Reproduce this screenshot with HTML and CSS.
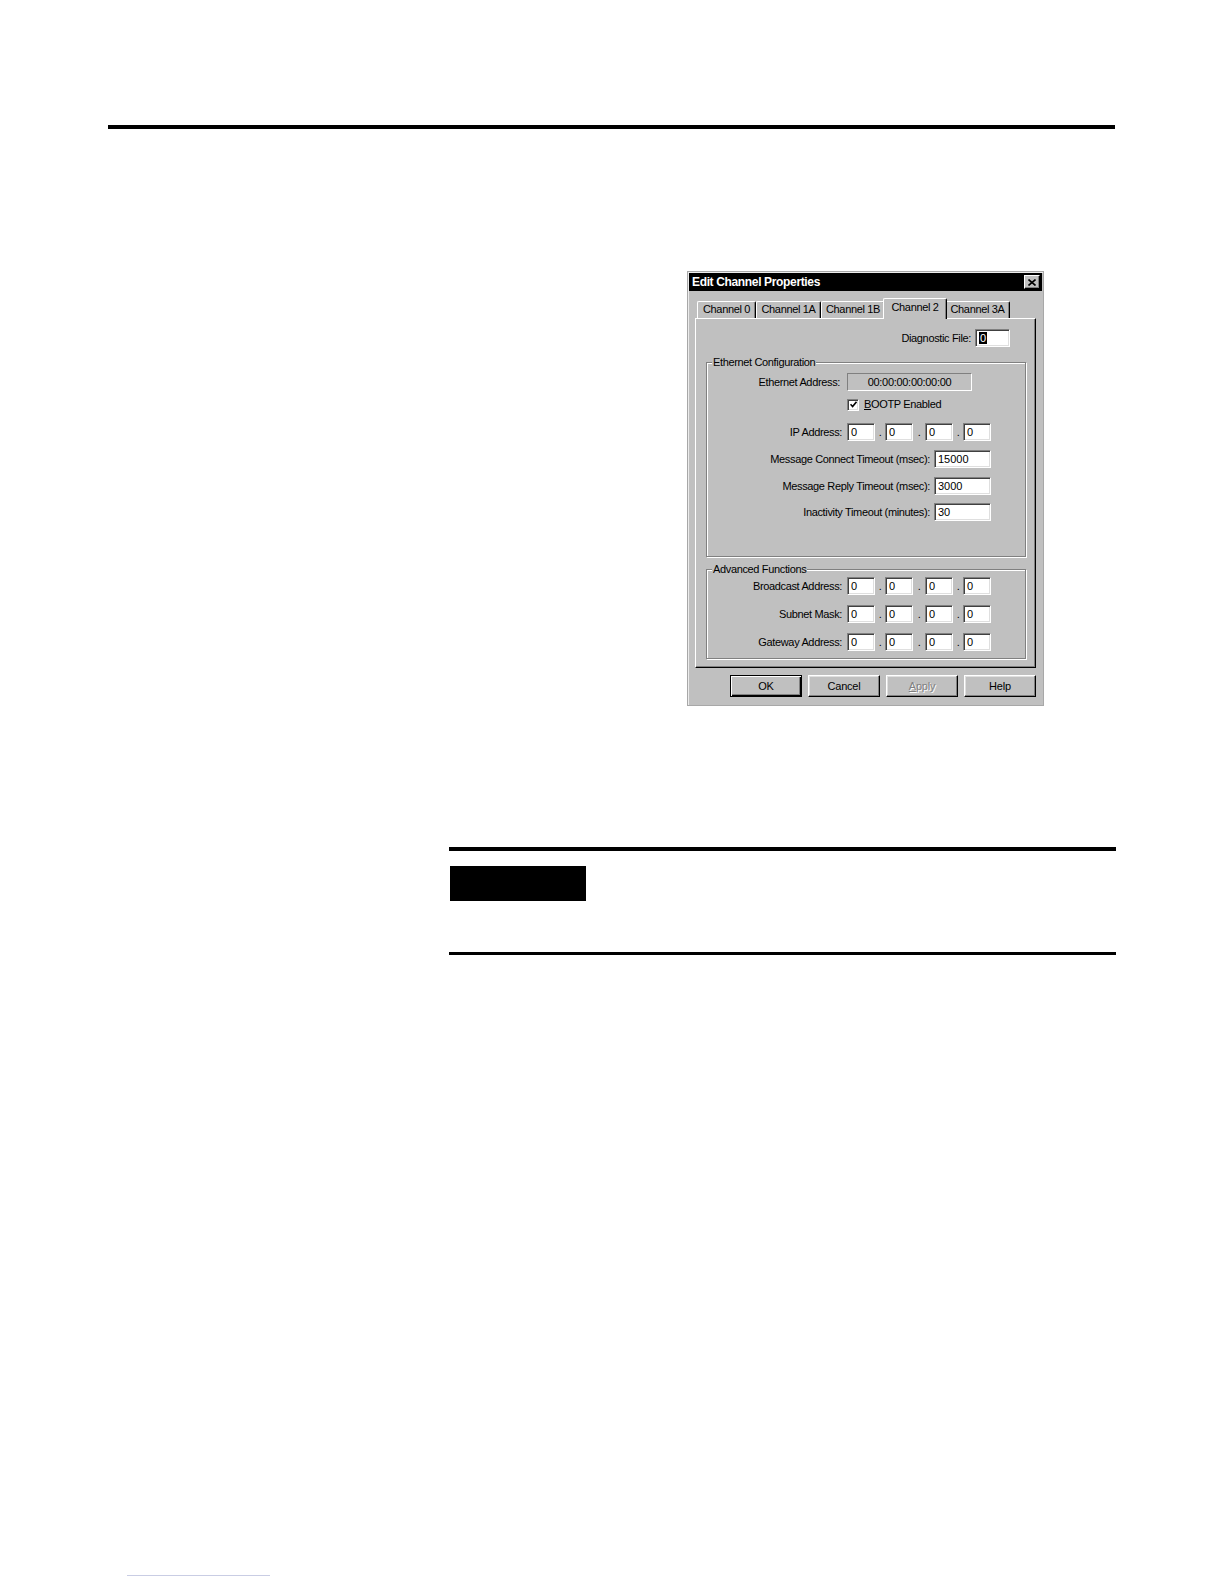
FILE: index.html
```html
<!DOCTYPE html>
<html lang="en">
<head>
<meta charset="utf-8">
<title>Edit Channel Properties</title>
<link rel="stylesheet" href="styles.css">
</head>
<body>
<div class="page">
  <div class="top-rule"></div>

  <div class="dialog">
    <div class="titlebar">
      <span class="title">Edit Channel Properties</span>
      <span class="close"><svg width="8" height="7" viewBox="0 0 8 7"><path d="M0.5 0.5L7.5 6.5M7.5 0.5L0.5 6.5" stroke="#000" stroke-width="1.6" fill="none"/></svg></span>
    </div>

    <div class="tabbar">
      <div class="tab tab-c0">Channel 0</div>
      <div class="tab tab-c1a">Channel 1A</div>
      <div class="tab tab-c1b">Channel 1B</div>
      <div class="tab tab-c2 selected">Channel 2</div>
      <div class="tab tab-c3a">Channel 3A</div>
    </div>

    <div class="panel">
      <div class="row diag-row">
        <span class="label gap4">Diagnostic File:</span>
        <span class="field w35"><span class="sel">0</span></span>
      </div>

      <div class="group eth">
        <span class="legend">Ethernet Configuration</span>
        <div class="row r-eth">
          <span class="label gap7">Ethernet Address:</span>
          <span class="readonly">00:00:00:00:00:00</span>
        </div>
        <div class="row r-boot">
          <span class="check"><svg width="7" height="7" viewBox="0 0 7 7"><path d="M0.5 3.2L2.6 5.5L6.5 0.8" stroke="#000" stroke-width="1.6" fill="none"/></svg></span>
          <span class="cblabel"><u>B</u>OOTP Enabled</span>
        </div>
        <div class="row r-ip">
          <span class="label gap5">IP Address:</span>
          <div class="ip">
            <span class="field w28">0</span><span class="dot d10">.</span><span class="field w28">0</span><span class="dot d12">.</span><span class="field w28">0</span><span class="dot d10">.</span><span class="field w28">0</span>
          </div>
        </div>
        <div class="row r-conn">
          <span class="label gap4">Message Connect Timeout (msec):</span>
          <span class="field w57">15000</span>
        </div>
        <div class="row r-reply">
          <span class="label gap4">Message Reply Timeout (msec):</span>
          <span class="field w57">3000</span>
        </div>
        <div class="row r-inact">
          <span class="label gap4">Inactivity Timeout (minutes):</span>
          <span class="field w57">30</span>
        </div>
      </div>

      <div class="group adv">
        <span class="legend">Advanced Functions</span>
        <div class="row r-bcast">
          <span class="label gap5">Broadcast Address:</span>
          <div class="ip">
            <span class="field w28">0</span><span class="dot d10">.</span><span class="field w28">0</span><span class="dot d12">.</span><span class="field w28">0</span><span class="dot d10">.</span><span class="field w28">0</span>
          </div>
        </div>
        <div class="row r-subnet">
          <span class="label gap5">Subnet Mask:</span>
          <div class="ip">
            <span class="field w28">0</span><span class="dot d10">.</span><span class="field w28">0</span><span class="dot d12">.</span><span class="field w28">0</span><span class="dot d10">.</span><span class="field w28">0</span>
          </div>
        </div>
        <div class="row r-gw">
          <span class="label gap5">Gateway Address:</span>
          <div class="ip">
            <span class="field w28">0</span><span class="dot d10">.</span><span class="field w28">0</span><span class="dot d12">.</span><span class="field w28">0</span><span class="dot d10">.</span><span class="field w28">0</span>
          </div>
        </div>
      </div>
    </div>

    <div class="buttons">
      <span class="btn default">OK</span>
      <span class="btn">Cancel</span>
      <span class="btn disabled"><u>A</u>pply</span>
      <span class="btn">Help</span>
    </div>
  </div>

  <div class="note">
    <div class="note-rule"></div>
    <div class="note-tag"></div>
    <div class="note-rule note-rule-bottom"></div>
  </div>

  <div class="footer-link"></div>
</div>
</body>
</html>
```

FILE: styles.css
```css
* {
  box-sizing: border-box;
}

html, body {
  margin: 0;
  padding: 0;
  background: #ffffff;
}

.page {
  width: 1224px;
  min-height: 1584px;
  padding-top: 125px;
  display: flex;
  flex-direction: column;
  align-items: flex-start;
  font-family: "Liberation Sans", Arial, sans-serif;
}

.top-rule {
  margin-left: 108px;
  width: 1007px;
  height: 4px;
  background: #000;
}

/* ---------- dialog ---------- */
.dialog {
  margin-top: 142px;
  margin-left: 687px;
  width: 357px;
  padding: 1px;
  background: #c0c0c0;
  border: 1px solid #a8a8a8;
  box-shadow: inset 1px 1px 0 #ececec;
  display: flex;
  flex-direction: column;
  font-size: 11px;
  letter-spacing: -0.35px;
  color: #000;
}

.titlebar {
  height: 18px;
  background: #000;
  display: flex;
  align-items: center;
  justify-content: space-between;
  padding-left: 3px;
  padding-right: 2px;
}

.title {
  color: #fff;
  font-weight: bold;
  font-size: 12px;
  letter-spacing: -0.35px;
  line-height: 18px;
}

.close {
  width: 16px;
  height: 14px;
  background: #c0c0c0;
  border-top: 1px solid #fff;
  border-left: 1px solid #fff;
  border-right: 1px solid #000;
  border-bottom: 1px solid #000;
  box-shadow: inset -1px -1px 0 #808080;
  display: flex;
  align-items: center;
  justify-content: center;
}

.close svg {
  display: block;
}

/* ---------- tabs ---------- */
.tabbar {
  margin-top: 7px;
  height: 20px;
  padding-left: 8px;
  display: flex;
  align-items: flex-end;
}

.tab {
  height: 17px;
  line-height: 15px;
  text-align: center;
  white-space: nowrap;
  border-top: 1px solid #fff;
  border-left: 1px solid #fff;
  border-right: 1px solid #000;
  border-radius: 2px 2px 0 0;
  box-shadow: inset -1px 0 0 #808080;
  background: #c0c0c0;
}

.tab-c0 { width: 59px; }
.tab-c1a { width: 65px; }
.tab-c1b { width: 64px; }
.tab-c2 { width: 64px; }
.tab-c3a { width: 65px; }

.tab.selected {
  height: 21px;
  margin: 0 -2px -1px -2px;
  line-height: 17px;
  position: relative;
  z-index: 1;
  padding-bottom: 3px;
}

/* ---------- panel ---------- */
.panel {
  margin-left: 6px;
  width: 341px;
  height: 350px;
  border-top: 1px solid #fff;
  border-left: 1px solid #fff;
  border-right: 1px solid #000;
  border-bottom: 1px solid #000;
  box-shadow: inset -1px -1px 0 #808080;
  padding: 0 9px 0 10px;
  display: flex;
  flex-direction: column;
}

.row {
  display: flex;
  align-items: center;
  justify-content: flex-end;
  height: 18px;
  white-space: nowrap;
}

.label {
  line-height: 18px;
}

.gap4 { margin-right: 4px; }
.gap5 { margin-right: 5px; }
.gap7 { margin-right: 7px; }

.diag-row {
  margin-top: 10px;
  padding-right: 16px;
}

.field {
  display: inline-block;
  height: 18px;
  background: #fff;
  border-top: 1px solid #808080;
  border-left: 1px solid #808080;
  border-right: 1px solid #fff;
  border-bottom: 1px solid #fff;
  box-shadow: inset 1px 1px 0 #404040, inset -1px -1px 0 #dfdfdf;
  padding-left: 3px;
  line-height: 16px;
  letter-spacing: 0;
}

.w28 { width: 28px; }
.w35 { width: 35px; }
.w57 { width: 57px; }

.sel {
  background: #000;
  color: #fff;
  padding: 0 1px;
}

.readonly {
  display: inline-block;
  width: 125px;
  height: 18px;
  border-top: 1px solid #808080;
  border-left: 1px solid #808080;
  border-right: 1px solid #fff;
  border-bottom: 1px solid #fff;
  text-align: center;
  line-height: 16px;
  letter-spacing: -0.3px;
}

/* ---------- group boxes ---------- */
.group {
  position: relative;
  border: 1px solid #808080;
  box-shadow: 1px 1px 0 #fff, inset 1px 1px 0 #fff;
  display: flex;
  flex-direction: column;
  padding-right: 34px;
}

.legend {
  position: absolute;
  left: 5px;
  top: -8px;
  padding: 0 1px;
  background: #c0c0c0;
  line-height: 14px;
  z-index: 1;
}

.eth {
  margin-top: 15px;
  height: 195px;
}

.adv {
  margin-top: 12px;
  height: 90px;
}

.r-eth {
  margin-top: 10px;
  margin-right: 19px;
}

.r-boot {
  margin-top: 7px;
  height: 13px;
  justify-content: flex-start;
  padding-left: 140px;
}

.check {
  width: 12px;
  height: 12px;
  background: #fff;
  border-top: 1px solid #808080;
  border-left: 1px solid #808080;
  border-right: 1px solid #fff;
  border-bottom: 1px solid #fff;
  box-shadow: inset 1px 1px 0 #404040, inset -1px -1px 0 #dfdfdf;
  display: flex;
  align-items: center;
  justify-content: center;
  margin-right: 5px;
}

.check svg {
  display: block;
}

.cblabel {
  line-height: 13px;
}

.r-ip { margin-top: 12px; }
.r-conn { margin-top: 9px; }
.r-reply { margin-top: 9px; }
.r-inact { margin-top: 8px; }

.r-bcast { margin-top: 7px; }
.r-subnet { margin-top: 10px; }
.r-gw { margin-top: 10px; }

.ip {
  display: flex;
  align-items: flex-end;
  height: 18px;
}

.dot {
  display: inline-block;
  text-align: center;
  line-height: 14px;
  height: 16px;
}

.d10 { width: 10px; }
.d12 { width: 12px; }

/* ---------- buttons ---------- */
.buttons {
  display: flex;
  justify-content: flex-end;
  gap: 6px;
  padding: 7px 6px 7px 0;
}

.btn {
  width: 72px;
  height: 22px;
  border-top: 1px solid #fff;
  border-left: 1px solid #fff;
  border-right: 1px solid #000;
  border-bottom: 1px solid #000;
  box-shadow: inset -1px -1px 0 #808080, inset 1px 1px 0 #dfdfdf;
  display: flex;
  align-items: center;
  justify-content: center;
  letter-spacing: -0.2px;
}

.btn.default {
  border: 1px solid #000;
  box-shadow: inset 1px 1px 0 #fff, inset -1px -1px 0 #000, inset -2px -2px 0 #808080;
}

.btn.disabled {
  color: #808080;
  text-shadow: 1px 1px 0 #fff;
}

/* ---------- note ---------- */
.note {
  margin-top: 141px;
  margin-left: 449px;
  width: 667px;
  display: flex;
  flex-direction: column;
}

.note-rule {
  height: 4px;
  background: #000;
}

.note-tag {
  margin-top: 15px;
  margin-left: 1px;
  width: 136px;
  height: 35px;
  background: #000;
}

.note-rule-bottom {
  margin-top: 51px;
  height: 3px;
}

.footer-link {
  margin-top: 620px;
  margin-left: 127px;
  width: 143px;
  height: 1px;
  background: #c9cde4;
}
```
